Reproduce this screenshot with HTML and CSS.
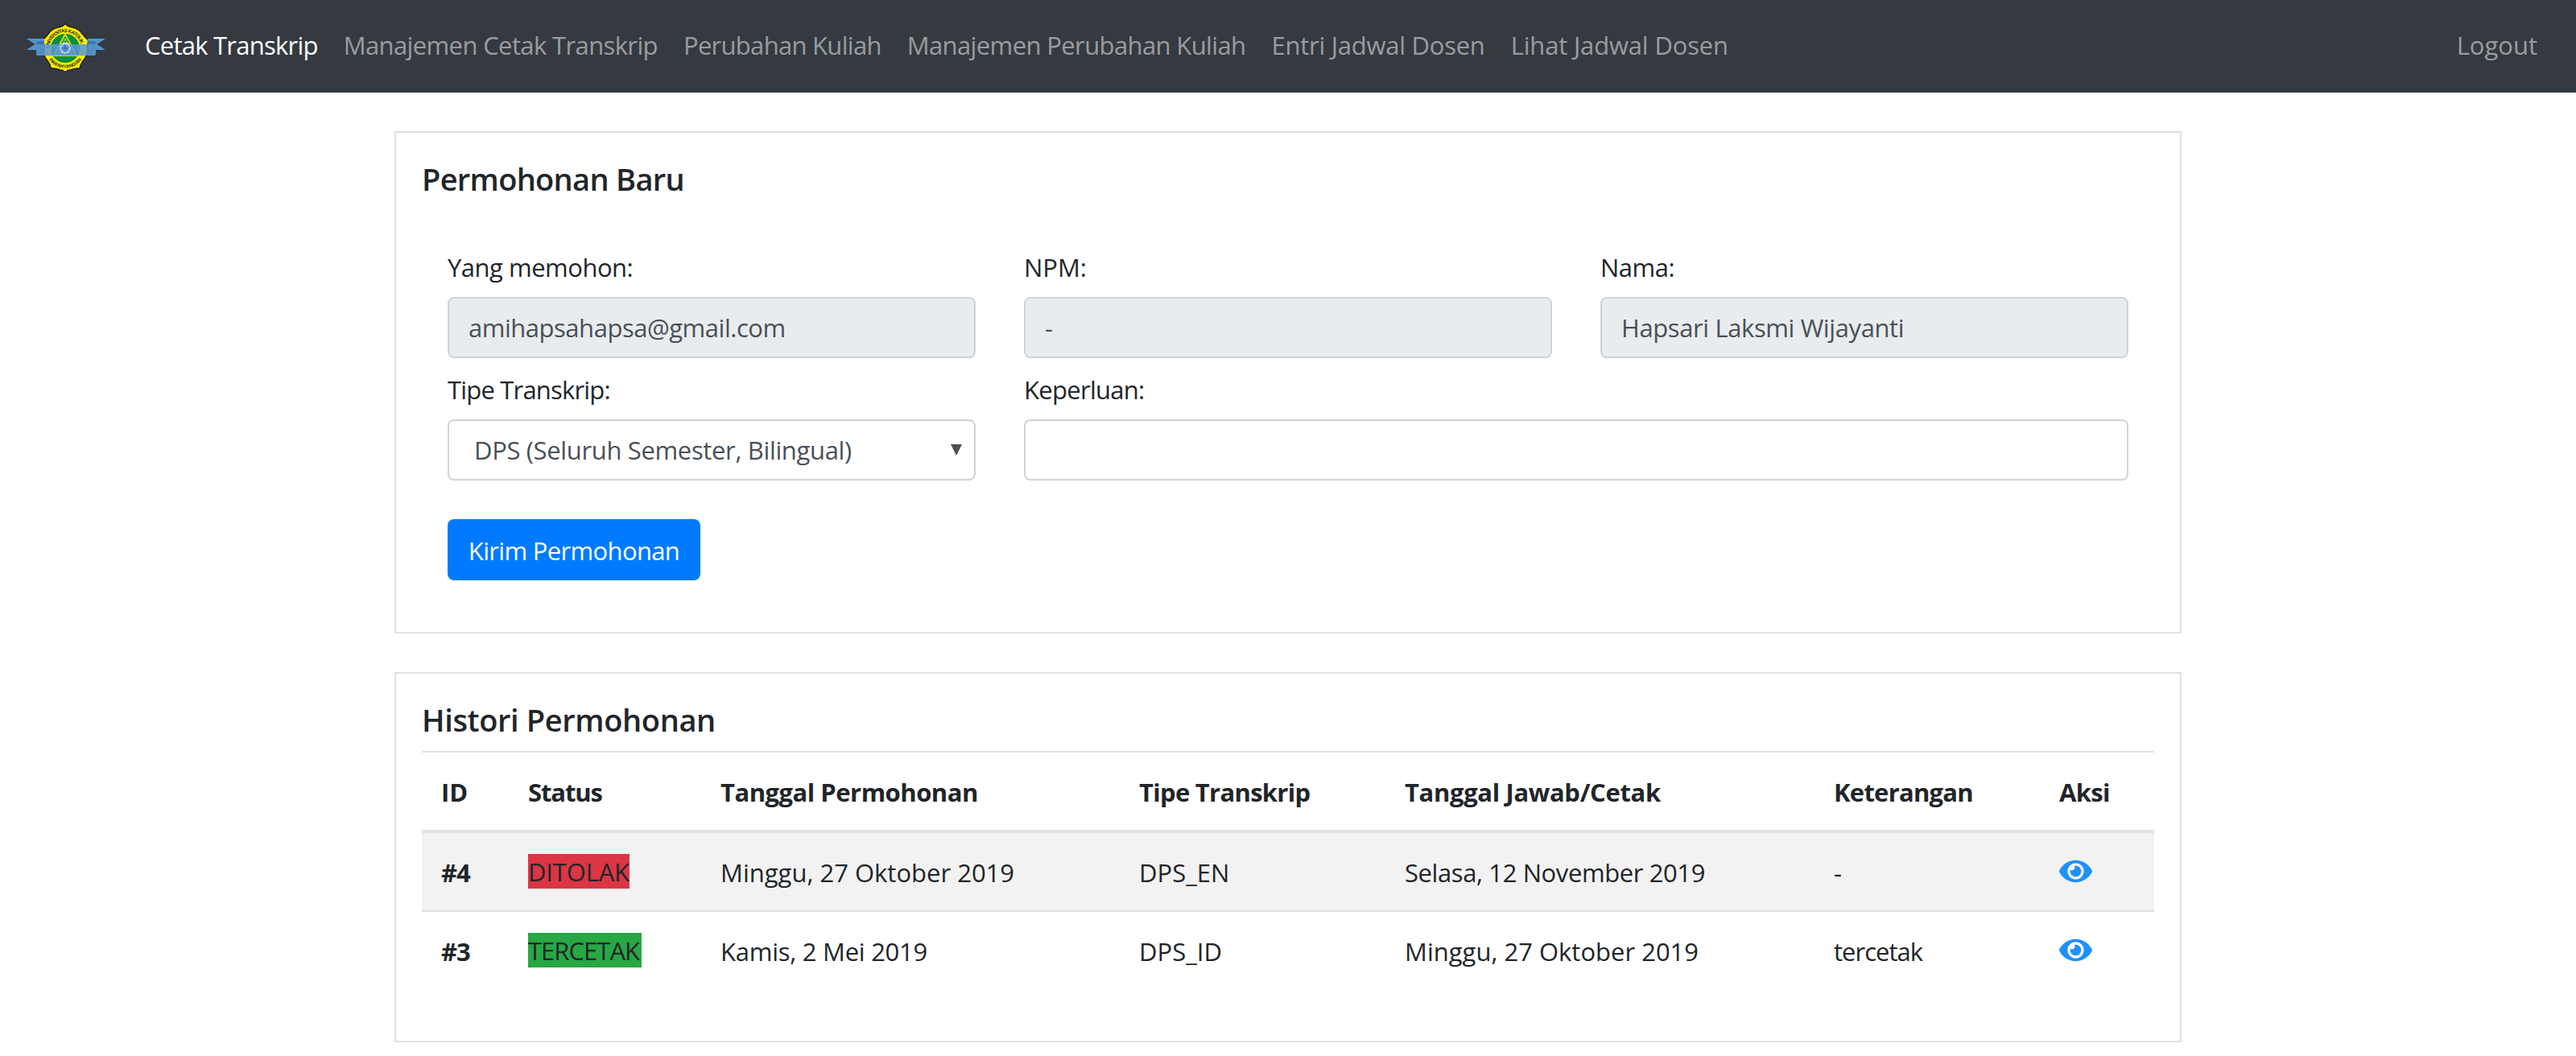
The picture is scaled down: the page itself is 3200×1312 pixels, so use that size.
FILE: index.html
```
<!DOCTYPE html>
<html lang="id">
<head>
<meta charset="utf-8">
<title>Cetak Transkrip</title>
<link rel="stylesheet" href="styles.css">
</head>
<body>
<nav class="navbar">
  <a class="brand" href="#">
    <svg class="logo" viewBox="96 84 300 180" aria-hidden="true">
      <defs>
        <path id="arc-top" d="M183 180A60 60 0 0 1 303 180"/>
        <path id="arc-bottom" d="M169 180A74 74 0 0 0 317 180"/>
      </defs>
      <path d="M243 88Q252 100 273 103Q294 108 304 123Q315 137 331 152Q324 168 326 186Q325 209 309 227Q299 240 297 255Q279 253 264 260Q243 266 222 260Q207 253 190 255Q188 240 178 227Q162 209 161 186Q163 168 157 152Q172 137 183 123Q193 108 214 103Q235 100 243 88Z" fill="#ffed00" stroke="#1c1c12" stroke-width="4"/>
      <circle cx="243" cy="180" r="54" fill="#0b8f3c"/>
      <path d="M243 128L286 207H200Z" fill="none" stroke="#c8d820" stroke-width="6"/>
      <path d="M243 145L268 198H218Z" fill="#087a30" stroke="#e4e51f" stroke-width="3"/>
      <circle cx="243" cy="180" r="22" fill="#f4f6f8"/>
      <circle cx="243" cy="180" r="13" fill="#3f6fae"/>
      <path d="M236 264L243 257L250 264Z" fill="#e8e8e8"/>
      <g class="seal-text">
        <text textLength="172"><textPath href="#arc-top">UNIVERSITAS KATOLIK</textPath></text>
        <text textLength="142"><textPath href="#arc-bottom" startOffset="45">PARAHYANGAN</textPath></text>
      </g>
      <path d="M98 144H165V165H135V186H98L131 165ZM393 144H326V165H357V186H393L361 165Z" fill="#5594cf"/>
      <path d="M135 165V160Q136 153 144 153H165V165ZM357 165V160Q356 153 348 153H326V165Z" fill="#3d76ad"/>
      <path d="M135 165H357V202Q357 207 352 207H140Q135 207 135 202Z" fill="#5b9bd5" fill-opacity=".88"/>
      <g fill="none" stroke="#487fb8" stroke-width="3">
        <path d="M165 165V190Q164 197 155 196M326 165V190Q327 197 337 196M218 167Q198 178 198 206M268 167Q288 178 288 206"/>
      </g>
      <circle cx="243" cy="180" r="17" fill="#5c93d0" stroke="#c6d9ee" stroke-width="6" stroke-dasharray="8 3"/>
      <path d="M243 169V191M232 180H254" stroke="#3f73b5" stroke-width="5"/>
    </svg>
  </a>
  <div class="nav-links">
    <a class="nav-link active ls-76" href="#">Cetak Transkrip</a>
    <a class="nav-link ls-62" href="#">Manajemen Cetak Transkrip</a>
    <a class="nav-link ls-71" href="#">Perubahan Kuliah</a>
    <a class="nav-link ls-62" href="#">Manajemen Perubahan Kuliah</a>
    <a class="nav-link ls-26" href="#">Entri Jadwal Dosen</a>
    <a class="nav-link ls-17" href="#">Lihat Jadwal Dosen</a>
  </div>
  <a class="nav-link logout" href="#">Logout</a>
</nav>

<main class="container">
  <section class="card">
    <h5 class="card-title ls-69">Permohonan Baru</h5>
    <form class="form">
      <div class="field">
        <label class="ls-50" for="email">Yang memohon:</label>
        <input class="control ls-48" id="email" value="amihapsahapsa@gmail.com" readonly>
      </div>
      <div class="field">
        <label for="npm">NPM:</label>
        <input class="control" id="npm" value="-" readonly>
      </div>
      <div class="field">
        <label class="ls-50" for="nama">Nama:</label>
        <input class="control ls-40" id="nama" value="Hapsari Laksmi Wijayanti" readonly>
      </div>
      <div class="field">
        <label class="ls-81" for="tipe">Tipe Transkrip:</label>
        <div class="select">
          <select class="control ls-35" id="tipe"><option>DPS (Seluruh Semester, Bilingual)</option></select>
          <svg class="caret" viewBox="0 0 14 14" aria-hidden="true"><path d="M0 0H14L7 14Z"/></svg>
        </div>
      </div>
      <div class="field wide">
        <label class="ls-71" for="keperluan">Keperluan:</label>
        <input class="control" id="keperluan">
      </div>
      <button class="btn ls-67" type="button">Kirim Permohonan</button>
    </form>
  </section>

  <section class="card">
    <h5 class="card-title ls-37">Histori Permohonan</h5>
    <table class="table">
      <colgroup>
        <col class="c-id"><col class="c-status"><col class="c-date"><col class="c-type"><col class="c-reply"><col class="c-note"><col>
      </colgroup>
      <thead>
        <tr>
          <th>ID</th>
          <th class="ls-112">Status</th>
          <th class="ls-50">Tanggal Permohonan</th>
          <th class="ls-71">Tipe Transkrip</th>
          <th class="ls-35">Tanggal Jawab/Cetak</th>
          <th class="ls-76">Keterangan</th>
          <th class="ls-67">Aksi</th>
        </tr>
      </thead>
      <tbody>
        <tr class="striped">
          <th class="ls-112">#4</th>
          <td><span class="status rejected ls-17">DITOLAK</span></td>
          <td>Minggu, 27 Oktober 2019</td>
          <td>DPS_EN</td>
          <td class="ls-40">Selasa, 12 November 2019</td>
          <td>-</td>
          <td>
            <a class="view" href="#" aria-label="Lihat"><svg class="eye" viewBox="0 0 576 512"><path d="M572.52 241.4C518.29 135.59 410.93 64 288 64S57.68 135.64 3.48 241.41a32.35 32.35 0 0 0 0 29.19C57.71 376.41 165.07 448 288 448s230.32-71.64 284.52-177.41a32.35 32.35 0 0 0 0-29.19zM288 400a144 144 0 1 1 144-144 143.93 143.93 0 0 1-144 144zm0-240a95.31 95.31 0 0 0-25.31 3.79 47.85 47.85 0 0 1-66.9 66.9A95.78 95.78 0 1 0 288 160z"/></svg></a>
          </td>
        </tr>
        <tr>
          <th class="ls-112">#3</th>
          <td><span class="status printed ls-98">TERCETAK</span></td>
          <td class="ls-26">Kamis, 2 Mei 2019</td>
          <td>DPS_ID</td>
          <td>Minggu, 27 Oktober 2019</td>
          <td class="ls-98">tercetak</td>
          <td>
            <a class="view" href="#" aria-label="Lihat"><svg class="eye" viewBox="0 0 576 512"><path d="M572.52 241.4C518.29 135.59 410.93 64 288 64S57.68 135.64 3.48 241.41a32.35 32.35 0 0 0 0 29.19C57.71 376.41 165.07 448 288 448s230.32-71.64 284.52-177.41a32.35 32.35 0 0 0 0-29.19zM288 400a144 144 0 1 1 144-144 143.93 143.93 0 0 1-144 144zm0-240a95.31 95.31 0 0 0-25.31 3.79 47.85 47.85 0 0 1-66.9 66.9A95.78 95.78 0 1 0 288 160z"/></svg></a>
          </td>
        </tr>
      </tbody>
    </table>
  </section>
</main>
</body>
</html>
```
FILE: styles.css
```
*, *::before, *::after { box-sizing: border-box; }

body {
  margin: 0;
  background: #fff;
  color: #212529;
  font: 400 31px/48px "Open Sans", "Noto Sans", sans-serif;
}

a { color: inherit; text-decoration: none; }

/* Navbar */
.navbar {
  display: flex;
  align-items: flex-start;
  height: 115px;
  padding: 0 32px;
  background: #343a40;
}
.brand { padding-top: 28px; margin-right: 32px; }
.logo { display: block; width: 100px; height: 60px; }
.seal-text {
  fill: #1c1c12;
  font: 700 18px "Liberation Sans", sans-serif;
}
.nav-links { display: flex; flex: 1; }
.nav-link {
  padding: 32px 16px 0;
  color: rgba(255, 255, 255, .5);
  white-space: nowrap;
}
.nav-link.active { color: #fff; }

/* Cards */
.container {
  width: 2220px;
  margin: 48px auto 0;
}
.card {
  height: 624px;
  margin-bottom: 48px;
  padding: 33px 32px 0;
  border: 2px solid #dee2e6;
}
.card + .card { height: 460px; margin-bottom: 0; }
.card-title {
  margin: 0;
  font-size: 38px;
  font-weight: 600;
  line-height: 48px;
}

/* Request form */
.form {
  display: grid;
  grid-template-columns: repeat(3, 656px);
  column-gap: 60px;
  padding: 62px 32px 0;
}
.field { height: 152px; }
.field.wide { grid-column: span 2; }
.field label { display: block; margin-bottom: 13px; }
.control {
  display: block;
  width: 100%;
  height: 76px;
  padding: 0 24px;
  border: 2px solid #ced4da;
  border-radius: 8px;
  background: #fff;
  color: #495057;
  font: inherit;
}
.control[readonly] { background: #e9ecef; }
.select { position: relative; }
.select .control { appearance: none; padding: 0 31px; }
.caret {
  position: absolute;
  top: 31px;
  right: 17px;
  width: 14px;
  height: 14px;
  fill: #495057;
}
.btn {
  width: 314px;
  height: 76px;
  margin-top: 33px;
  padding: 1px 0 0;
  border: 0;
  border-radius: 8px;
  background: #007bff;
  color: #fff;
  font: inherit;
}

/* History table */
.table {
  width: 2152px;
  margin-top: 15px;
  border-spacing: 0;
  table-layout: fixed;
}
.c-id { width: 108px; }
.c-status { width: 239px; }
.c-date { width: 520px; }
.c-type { width: 330px; }
.c-reply { width: 533px; }
.c-note { width: 280px; }
.table th, .table td {
  padding: 25px 0 23px 24px;
  text-align: left;
  vertical-align: top;
  white-space: nowrap;
}
.table th { font-weight: 700; }
.table thead th {
  border-top: 2px solid #dee2e6;
  border-bottom: 4px solid #dee2e6;
}
.table tbody tr + tr > * { border-top: 2px solid #dee2e6; }
.striped { background: #f2f2f2; }
.status {
  display: block;
  height: 43px;
  margin: 1px 0 4px;
  padding-top: 1px;
  line-height: 43px;
}
.rejected { width: 126px; background: #dc3545; }
.printed { width: 141px; background: #28a745; }
.view { display: block; height: 48px; padding-top: 4px; }
.eye { display: block; width: 41px; height: 37px; fill: #1e90ff; }

/* Tracking steps, in hundredths of a pixel */
.ls-17 { letter-spacing: -.17px; }
.ls-26 { letter-spacing: -.26px; }
.ls-35 { letter-spacing: -.35px; }
.ls-37 { letter-spacing: -.37px; }
.ls-40 { letter-spacing: -.4px; }
.ls-48 { letter-spacing: -.48px; }
.ls-50 { letter-spacing: -.5px; }
.ls-62 { letter-spacing: -.62px; }
.ls-67 { letter-spacing: -.67px; }
.ls-69 { letter-spacing: -.69px; }
.ls-71 { letter-spacing: -.71px; }
.ls-76 { letter-spacing: -.76px; }
.ls-81 { letter-spacing: -.81px; }
.ls-98 { letter-spacing: -.98px; }
.ls-112 { letter-spacing: -1.12px; }
```
